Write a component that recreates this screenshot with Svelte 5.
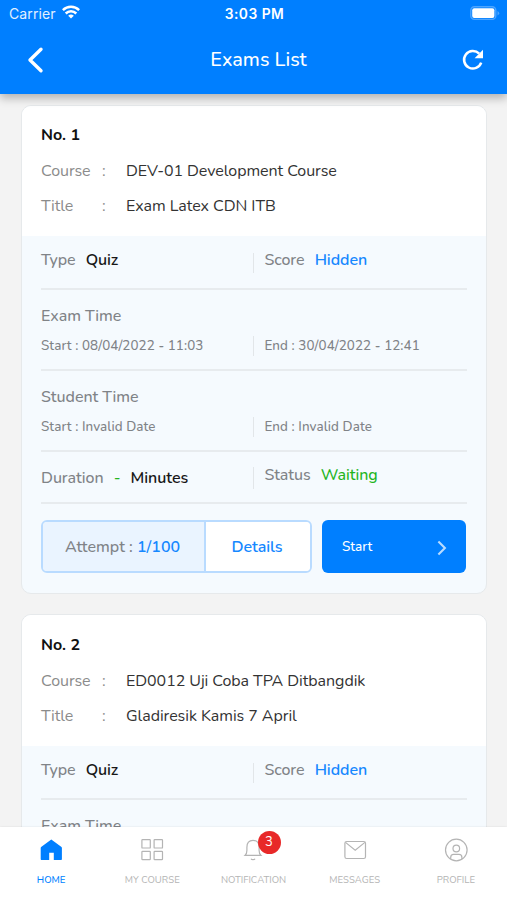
<script lang="ts">
    type Exam = {
        no: number;
        course: string;
        title: string;
        start: string;
        end: string;
    };

    let active = $state("home");

    const exams: Exam[] = [
        {
            no: 1,
            course: "DEV-01 Development Course",
            title: "Exam Latex CDN ITB",
            start: "08/04/2022 - 11:03",
            end: "30/04/2022 - 12:41",
        },
        {
            no: 2,
            course: "ED0012 Uji Coba TPA Ditbangdik",
            title: "Gladiresik Kamis 7 April",
            start: "08/04/2022 - 11:03",
            end: "30/04/2022 - 12:41",
        },
    ];

    const tabs = [
        { id: "home", label: "HOME" },
        { id: "course", label: "MY COURSE" },
        { id: "notification", label: "NOTIFICATION", badge: 3 },
        { id: "messages", label: "MESSAGES" },
        { id: "profile", label: "PROFILE" },
    ];
</script>

<div class="screen">
    <header>
        <div class="status">
            <div class="carrier">
                <span>Carrier</span>
                <svg width="18" height="14" viewBox="0 0 18 14" fill="none" stroke="#fff" stroke-width="2.5">
                    <path d="M.9 5.1a11.6 11.6 0 0 1 16.2 0" />
                    <path d="M3.7 8.5a7.6 7.6 0 0 1 10.6 0" />
                    <path d="M9 13.6 6.2 10.8a4.1 4.1 0 0 1 5.6 0z" fill="#fff" stroke="none" />
                </svg>
            </div>
            <span class="time">3:03 PM</span>
            <svg class="battery" width="30" height="15" viewBox="0 0 30 15">
                <rect x=".8" y=".8" width="25" height="12.6" rx="3.6" fill="none" stroke="#4da5ff" stroke-width="1.4" />
                <rect x="2.2" y="2.2" width="22.2" height="9.8" rx="2" fill="#fff" />
                <path d="M27.5 5v4.4q1.7-.7 1.7-2.2T27.5 5z" fill="#4da5ff" />
            </svg>
        </div>
        <div class="bar">
            <button aria-label="Back">
                <svg width="18" height="28" viewBox="0 0 18 28" fill="none" stroke="#fff" stroke-width="3.4" stroke-linecap="round" stroke-linejoin="round">
                    <path d="M15 3.2 4 14l11 10.8" />
                </svg>
            </button>
            <h1>Exams List</h1>
            <button aria-label="Refresh">
                <svg width="22" height="22" viewBox="0 0 22 22">
                    <path d="M17.2 4.6A8.8 8.8 0 1 0 19.2 13.6" fill="none" stroke="#fff" stroke-width="2.5" />
                    <path d="M21 .8v8.4h-8.4z" fill="#fff" />
                </svg>
            </button>
        </div>
    </header>

    <main>
        {#each exams as exam (exam.no)}
            <article>
                <section class="head">
                    <h2>No. {exam.no}</h2>
                    <dl>
                        <dt>Course</dt>
                        <dd>:</dd>
                        <dd>{exam.course}</dd>
                    </dl>
                    <dl>
                        <dt>Title</dt>
                        <dd>:</dd>
                        <dd>{exam.title}</dd>
                    </dl>
                </section>
                <section class="body">
                    <div class="row type">
                        <p>Type <strong>Quiz</strong></p>
                        <p>Score <span class="blue">Hidden</span></p>
                    </div>
                    <div class="period">
                        <h3>Exam Time</h3>
                        <div class="row small">
                            <p>Start : {exam.start}</p>
                            <p>End : {exam.end}</p>
                        </div>
                    </div>
                    <div class="period">
                        <h3>Student Time</h3>
                        <div class="row small">
                            <p>Start : Invalid Date</p>
                            <p>End : Invalid Date</p>
                        </div>
                    </div>
                    <div class="row duration">
                        <p>Duration <span class="green">-</span> <strong>Minutes</strong></p>
                        <p>Status <span class="green">Waiting</span></p>
                    </div>
                    <div class="actions">
                        <div class="group">
                            <span class="attempt">Attempt : <b>1/100</b></span>
                            <button class="details">Details</button>
                        </div>
                        <button class="start">
                            Start
                            <svg width="10" height="16" viewBox="0 0 10 16" fill="none" stroke="#b9dcff" stroke-width="2.1">
                                <path d="m1.4 1.5 6.5 6.5-6.5 6.5" />
                            </svg>
                        </button>
                    </div>
                </section>
            </article>
        {/each}
    </main>

    <nav>
        {#each tabs as tab (tab.id)}
            <button class:active={active === tab.id} onclick={() => (active = tab.id)}>
                <span class="icon">
                    <svg width="24" height="24" viewBox="0 0 24 24" fill="none" stroke="currentColor" stroke-width="1.2">
                        {#if tab.id === "home"}
                            <path d="M12.3 1.4 22.5 9c.3.3.4.5.4.9v11c0 .6-.4 1-1 1h-7.1v-7.2h-4.6v7.2H2.7c-.6 0-1-.4-1-1v-11c0-.4.1-.6.4-.9z" fill="currentColor" stroke="none" />
                        {:else if tab.id === "course"}
                            <rect x="1.9" y="1.6" width="8.4" height="8.4" rx=".6" />
                            <rect x="14.1" y="1.6" width="8.4" height="8.4" rx=".6" />
                            <rect x="1.9" y="13.3" width="8.4" height="8.4" rx=".6" />
                            <rect x="14.1" y="13.3" width="8.4" height="8.4" rx=".6" />
                        {:else if tab.id === "notification"}
                            <path d="M3 17.4c1.5-1.4 1.9-2.8 1.9-5V9.2c0-4.2 2.2-6.9 6.1-6.9s6.1 2.7 6.1 6.9v3.2c0 2.2.4 3.600 1.900 5zM9 20.700c.6 1.300 3.400 1.300 4 0" />
                        {:else if tab.id === "messages"}
                            <rect x="1.9" y="3.5" width="20.6" height="17" rx="1.8" />
                            <path d="m2.5 4.4 9.7 7.8 9.7-7.8" />
                        {:else}
                            <circle cx="12.3" cy="12" r="10.8" />
                            <circle cx="12.3" cy="10.5" r="3.3" />
                            <path d="M6.700 21v-1.600c0-1.900 1.100-3 2.900-3H15c1.800 0 2.900 1.100 2.900 3V21" />
                        {/if}
                    </svg>
                    {#if tab.badge}
                        <span class="badge">{tab.badge}</span>
                    {/if}
                </span>
                <span class="label">{tab.label}</span>
            </button>
        {/each}
    </nav>
</div>

<style>
    :global(body) {
        background: #f3f3f3;
    }
    .screen {
        display: flex;
        flex-direction: column;
        height: 900px;
        overflow: hidden;
        font-family: Nunito, Lato, sans-serif;
        font-size: 16px;
        letter-spacing: -0.06px;
        color: #333;
    }
    h1,
    h2,
    h3,
    p,
    dl,
    dd {
        margin: 0;
    }
    button {
        padding: 0;
        border: 0;
        background: none;
        font: inherit;
        letter-spacing: inherit;
        color: inherit;
    }
    svg {
        display: block;
    }
    header {
        flex: none;
        z-index: 1;
        height: 94px;
        background: #007fff;
        box-shadow: 0 4px 9px rgba(0, 0, 0, 0.28);
        color: #fff;
    }
    .status {
        display: grid;
        grid-template-columns: 1fr auto 1fr;
        align-items: center;
        height: 27px;
        padding: 0 7px 0 9px;
        font-family: Inter, sans-serif;
        font-size: 14px;
    }
    .carrier {
        display: flex;
        gap: 6px;
        letter-spacing: 0.1px;
        color: #e2f0ff;
    }
    .time {
        font-weight: 600;
        font-size: 13.8px;
        letter-spacing: 0.5px;
    }
    .battery {
        justify-self: end;
    }
    .bar {
        display: flex;
        align-items: center;
        justify-content: space-between;
        height: 66px;
        padding: 0 23px 0 26px;
    }
    h1 {
        padding: 0 0 1px 11px;
        font-size: 19.8px;
        line-height: 28px;
        font-weight: 500;
        letter-spacing: 0;
    }
    main {
        flex: 1;
        min-height: 0;
        overflow: hidden;
        padding: 11px 20px 0 21px;
    }
    article {
        height: 487px;
        margin-bottom: 20px;
        overflow: hidden;
        border: 1px solid #e6e9eb;
        border-radius: 10px;
        background: #f5fafe;
    }
    .head {
        display: flex;
        flex-direction: column;
        height: 130px;
        padding: 12px 19px 0;
        box-sizing: border-box;
        background: #fff;
    }
    article + article .head {
        height: 131px;
        padding-top: 13px;
    }
    h2 {
        height: 35px;
        line-height: 35px;
        font-size: 16px;
        letter-spacing: 0.05px;
        color: #111;
    }
    dl {
        display: grid;
        grid-template-columns: 61px 24px 1fr;
        height: 35px;
        line-height: 36px;
    }
    dt,
    dl dd:nth-of-type(1) {
        color: #8b8b8b;
    }
    .body {
        padding: 0 19px;
    }
    .row {
        display: grid;
        grid-template-columns: 212px 1fr;
        color: #808387;
    }
    .row p {
        line-height: 20px;
        white-space: pre;
        font-weight: 500;
    }
    .row p + p {
        padding-left: 10.4px;
        border-left: 1px solid #e2e6e9;
    }
    .type,
    .period,
    .duration {
        box-sizing: border-box;
        border-bottom: 2px solid #e7ebee;
    }
    .type {
        height: 54px;
        padding: 17px 0 15px;
    }
    .type p,
    .type p + p {
        line-height: 14px;
    }
    .period {
        height: 81px;
        padding-top: 16px;
    }
    h3 {
        height: 30px;
        line-height: 21px;
        font-size: 16px;
        font-weight: 500;
        letter-spacing: -0.03px;
        color: #808387;
    }
    .small {
        height: 19px;
        font-size: 13.4px;
        letter-spacing: 0.08px;
    }
    .small p {
        line-height: 20px;
    }
    .duration {
        height: 52px;
        padding: 15px 0;
    }
    .duration p {
        line-height: 22px;
    }
    .duration p + p {
        line-height: 16px;
    }
    .row strong,
    .row span {
        margin-left: 6px;
        font-weight: 500;
    }
    .row strong {
        font-weight: 600;
        color: #181818;
    }
    .row .blue {
        font-weight: 600;
        color: #1688ff;
    }
    .row .green {
        color: #24b51e;
    }
    .actions {
        display: grid;
        grid-template-columns: 271px 144px;
        gap: 10px;
        height: 53px;
        margin-top: 16px;
    }
    .group {
        display: grid;
        grid-template-columns: 163px 1fr;
        border: 2px solid #b9dbff;
        border-radius: 6px;
        overflow: hidden;
    }
    .attempt,
    .details {
        display: flex;
        align-items: center;
        justify-content: center;
    }
    .attempt {
        box-sizing: border-box;
        padding-right: 2px;
        border-right: 2px solid #b9dbff;
        background: #eaf4ff;
        font-weight: 500;
        letter-spacing: 0;
        color: #808387;
        white-space: pre;
    }
    .attempt b {
        font-weight: 600;
        color: #1688ff;
    }
    .details {
        padding-right: 2px;
        background: #fff;
        font-weight: 600;
        color: #1688ff;
    }
    .start {
        display: flex;
        align-items: center;
        justify-content: space-between;
        padding: 0 19px 0 20px;
        border-radius: 6px;
        background: #007fff;
        font-size: 13.5px;
        font-weight: 500;
        color: #fff;
    }
    .start svg {
        margin-top: 3px;
    }
    nav {
        flex: none;
        display: grid;
        grid-template-columns: repeat(5, 101.2px);
        justify-content: center;
        height: 73px;
        background: #fff;
        box-shadow: 0 0 2px rgba(0, 0, 0, 0.1);
        z-index: 1;
    }
    nav button {
        display: flex;
        flex-direction: column;
        align-items: center;
        padding-top: 11px;
        color: #b4b4b4;
    }
    nav .active {
        color: #007fff;
    }
    .icon {
        position: relative;
    }
    .label {
        margin-top: 12px;
        font-size: 9.6px;
        line-height: 12px;
        letter-spacing: 0;
    }
    .active .label {
        font-weight: 500;
    }
    .badge {
        position: absolute;
        top: -7px;
        left: 16px;
        width: 23px;
        height: 23px;
        border-radius: 50%;
        background: #e82929;
        font-size: 13px;
        line-height: 23px;
        text-align: center;
        letter-spacing: 0;
        color: #fff;
    }
</style>
